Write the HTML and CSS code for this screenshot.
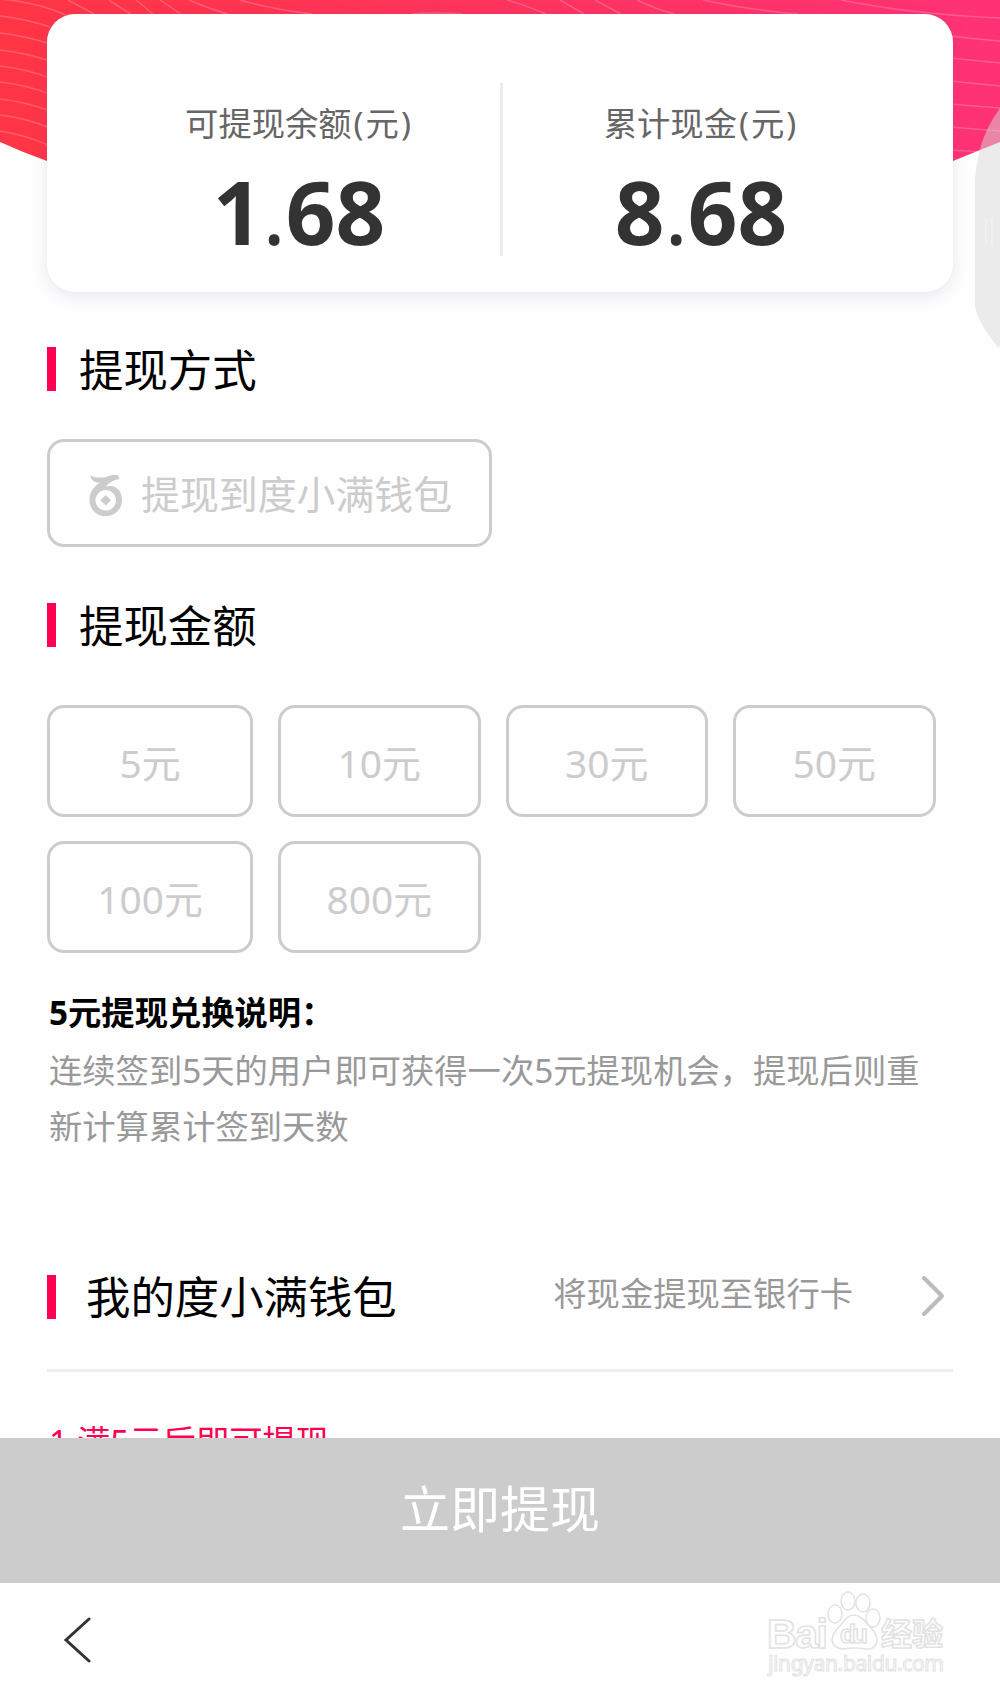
FILE: index.html
```
<!DOCTYPE html>
<html lang="zh-CN">

<head>
    <meta charset="UTF-8" />
    <meta name="viewport" content="width=device-width, initial-scale=1.0" />
    <title>提现</title>
    <link rel="stylesheet" href="styles.css">
</head>

<body>
    <!-- Red banner behind the card -->
    <svg class="banner" viewBox="0 0 1000 300" aria-hidden="true">
        <defs>
            <linearGradient id="bannerFill" x1="0" y1="0" x2="1" y2="0">
                <stop offset="0" stop-color="#ff3545" />
                <stop offset="1" stop-color="#ff3276" />
            </linearGradient>
        </defs>
        <path d="M0 0H1000V142Q975 152 953 161Q500 290 47 161Q22 152 0 142Z" fill="url(#bannerFill)" />
        <g class="banner-lines">
            <path d="M0 -1Q36 2 66 15" />
            <path d="M0 16Q26 19 50 27" />
            <path d="M0 33Q26 36 50 44" />
            <path d="M0 50Q26 53 50 61" />
            <path d="M0 66Q26 69 50 78" />
            <path d="M0 82Q26 85 50 94" />
            <path d="M0 99Q26 102 50 111" />
            <path d="M0 115Q26 118 50 128" />
            <path d="M0 131Q26 135 50 146" />
            <path d="M68 0L94 14M109 0L132 15M136 0L154 15M160 0L182 15M189 0Q207 8 228 14M240 0Q270 9 312 14" />
            <path d="M412 14Q430 12 462 14M507 0Q528 6 546 14M560 0L584 14M595 0L621 14M637 0Q655 9 675 14M703 0Q748 10 798 14M841 0Q910 14 1000 18" />
            <path d="M950 36Q975 39 1000 41M950 58L1000 63M950 81L1000 86M950 104L1000 108M950 127L1000 131M950 150L982 152" />
        </g>
    </svg>

    <main class="page">
        <!-- Balance card -->
        <section class="card">
            <div class="balance balance-left">
                <div class="balance-label">可提现余额<span class="paren">(</span>元<span class="paren">)</span></div>
                <div class="balance-num">1<span class="dot">.</span>68</div>
            </div>
            <div class="card-line"></div>
            <div class="balance balance-right">
                <div class="balance-label">累计现金<span class="paren">(</span>元<span class="paren">)</span></div>
                <div class="balance-num">8<span class="dot">.</span>68</div>
            </div>
        </section>

        <h2 class="title"><span>提现方式</span></h2>
        <button class="option method">
            <svg class="wallet-icon" width="34" height="42" viewBox="0 0 34 42" aria-hidden="true">
                <path fill-rule="evenodd" d="M1 0C4 3 12 3 17 2C22 0 26 -0.500 29 0.500L30.500 4C25 5 20 7 17 11.500C27 9 33 16 33 25A16.300 16.300 0 1 1 0.400 25C0.400 18 4 12 11 7.500C6 8 2 5 1 0ZM16.700 15A10.300 10.300 0 1 0 16.800 15Z" />
                <path d="M16.700 20L22 25.300L16.700 30.600L11.400 25.300Z" />
            </svg>
            <span class="method-text">提现到度小满钱包</span>
        </button>

        <h2 class="title title-amount"><span>提现金额</span></h2>
        <div class="amounts">
            <button class="option">5元</button>
            <button class="option">10元</button>
            <button class="option">30元</button>
            <button class="option">50元</button>
            <button class="option">100元</button>
            <button class="option">800元</button>
        </div>

        <div class="note">
            <h3 class="note-title">5元提现兑换说明：</h3>
            <p class="note-text">连续签到5天的用户即可获得一次5元提现机会，提现后则重新计算累计签到天数</p>
        </div>

        <div class="wallet-row">
            <h2 class="title title-wallet">我的度小满钱包</h2>
            <a class="bank-link">将现金提现至银行卡</a>
            <svg class="arrow" width="24" height="42" viewBox="0 0 24 42" aria-hidden="true">
                <path d="M3 3L21 21L3 39" />
            </svg>
        </div>
        <p class="rule">1.满5元后即可提现</p>
    </main>

    <!-- Fixed footer -->
    <footer class="footer">
        <button class="submit">立即提现</button>
        <nav class="nav">
            <svg class="back" width="30" height="46" viewBox="0 0 30 46" aria-hidden="true">
                <path d="M26 2L3 23L26 44" />
            </svg>
            <svg class="watermark" width="184" height="90" viewBox="0 0 184 90" aria-hidden="true">
                <text class="mark-big" x="0" y="57" textLength="61">Bai</text>
                <ellipse cx="68" cy="23" rx="7" ry="9" />
                <ellipse cx="81" cy="10" rx="7" ry="9" />
                <ellipse cx="96" cy="12" rx="7" ry="9" />
                <ellipse cx="106" cy="27" rx="7" ry="9" />
                <path d="M87 24Q94 24 101 34Q110 42 110 49Q109 59 99 58Q87 56 76 58Q65 57 65 48Q66 41 74 34Q80 24 87 24Z" />
                <text class="mark-du" x="73" y="52" textLength="28">du</text>
                <text class="mark-cn" x="114" y="54" textLength="62">经验</text>
                <text class="mark-url" x="1" y="80" textLength="176">jingyan.baidu.com</text>
            </svg>
        </nav>
    </footer>

    <!-- Edge handle -->
    <svg class="handle" width="25" height="250" viewBox="0 0 25 250" aria-hidden="true">
        <path d="M25 8Q9 30 4 53Q1 67 0 80V206Q4 225 23 247H25Z" />
        <path class="grip" d="M11 118V145M17 118V145" />
    </svg>
</body>

</html>
```
FILE: styles.css
```
body {
    font-family: "Noto Sans", "Noto Sans CJK SC", sans-serif;
    margin: 0;
    height: 1698px;
    overflow: hidden;
    background: #fefefe;
    color: #000;
}

h2,
h3,
p {
    margin: 0;
    font-weight: 400;
}

button {
    font-family: inherit;
    padding: 0;
}

.banner {
    position: absolute;
    top: 0;
    left: 0;
    width: 1000px;
    height: 300px;
    z-index: -1;
}

.banner-lines {
    fill: none;
    stroke: #fff;
    stroke-opacity: 0.2;
    stroke-width: 1.5;
}

.page {
    padding: 14px 47px 0;
}

.card {
    display: flex;
    height: 278px;
    border-radius: 28px;
    background: #fff;
    box-shadow: 0 4px 16px rgba(80, 60, 140, 0.13);
}

.balance {
    box-sizing: border-box;
    padding-top: 84px;
    text-align: center;
}

.balance-left {
    width: 453px;
    padding-left: 51px;
}

.balance-right {
    width: 450px;
    padding-right: 54px;
}

.balance-label {
    font-size: 33.3px;
    line-height: 50px;
    color: #666;
}

.paren {
    padding: 0 2px;
}

.balance-num {
    font-size: 87px;
    font-weight: 700;
    line-height: 100px;
    color: #333;
    margin-top: 13px;
}

.dot {
    font-weight: 400;
}

.card-line {
    width: 3px;
    height: 173px;
    margin-top: 69px;
    background: #ebebeb;
}

.title {
    display: flex;
    align-items: center;
    margin-top: 55px;
    height: 44px;
    font-size: 44.4px;
    line-height: 44px;
}

.title span {
    padding-top: 2px;
}

.title::before {
    content: "";
    width: 9px;
    height: 44px;
    margin-right: 23px;
    background: #ff0052;
}

.option {
    box-sizing: border-box;
    border: 3px solid #ccc;
    border-radius: 17px;
    background: transparent;
    color: #ccc;
    font-size: 38.9px;
}

.method {
    display: flex;
    align-items: center;
    width: 445px;
    height: 108px;
    margin-top: 48px;
    padding-left: 39px;
}

.method-text {
    padding-bottom: 3px;
}

.wallet-icon {
    fill: #ccc;
    margin-top: 6px;
    margin-right: 18px;
}

.title-amount {
    margin-top: 56px;
}

.amounts {
    display: grid;
    grid-template-columns: 206px 202.500px 202.500px 202.500px;
    grid-auto-rows: 112px;
    gap: 24px 25px;
    margin-top: 58px;
}

.note {
    padding: 31px 2px 0;
}

.note-title {
    font-size: 33.3px;
    font-weight: 700;
    line-height: 56px;
}

.note-text {
    margin-top: 3px;
    font-size: 33.3px;
    line-height: 55.6px;
    color: #999;
}

.wallet-row {
    display: flex;
    align-items: center;
    height: 147px;
    margin-top: 68px;
    border-bottom: 3px solid #eee;
}

.title-wallet {
    margin-top: 3px;
}

.title-wallet::before {
    margin-right: 30px;
}

.bank-link {
    margin-left: auto;
    padding-bottom: 8px;
    font-size: 33.3px;
    color: #999;
}

.arrow {
    margin-left: 68px;
    margin-right: 8px;
    fill: none;
    stroke: #bbb;
    stroke-width: 4;
    stroke-linecap: round;
    stroke-linejoin: round;
}

.rule {
    margin-top: 41px;
    padding-left: 2px;
    font-size: 33.3px;
    line-height: 56px;
    color: #ff0052;
}

.footer {
    position: fixed;
    left: 0;
    bottom: 0;
    width: 100%;
    height: 260px;
    background: #fefefe;
}

.submit {
    display: block;
    box-sizing: border-box;
    width: 100%;
    height: 144.5px;
    padding-bottom: 8px;
    border: none;
    background: #ccc;
    color: #fff;
    font-size: 50px;
}

.nav {
    display: flex;
    justify-content: space-between;
    height: 115px;
}

.back {
    margin: 34px 0 0 63px;
    fill: none;
    stroke: #333;
    stroke-width: 3;
    stroke-linecap: round;
}

.watermark {
    margin: 8px 49px 0 0;
    fill: #fefefe;
    stroke: #e2e2e2;
    stroke-width: 1.5;
}

.mark-big,
.mark-du {
    font-family: "Liberation Sans", sans-serif;
    font-weight: 700;
    font-size: 41px;
}

.mark-du {
    font-size: 26px;
}

.mark-cn {
    font-family: "Noto Sans CJK SC", sans-serif;
    font-weight: 700;
    font-size: 31px;
}

.mark-url {
    font-family: "Noto Sans", sans-serif;
    font-size: 21px;
    stroke-width: 1;
}

.handle {
    position: absolute;
    top: 100px;
    right: 0;
    fill: rgba(215, 215, 215, 0.5);
}

.grip {
    stroke: #f2f2f2;
    stroke-width: 1.5;
}
```
